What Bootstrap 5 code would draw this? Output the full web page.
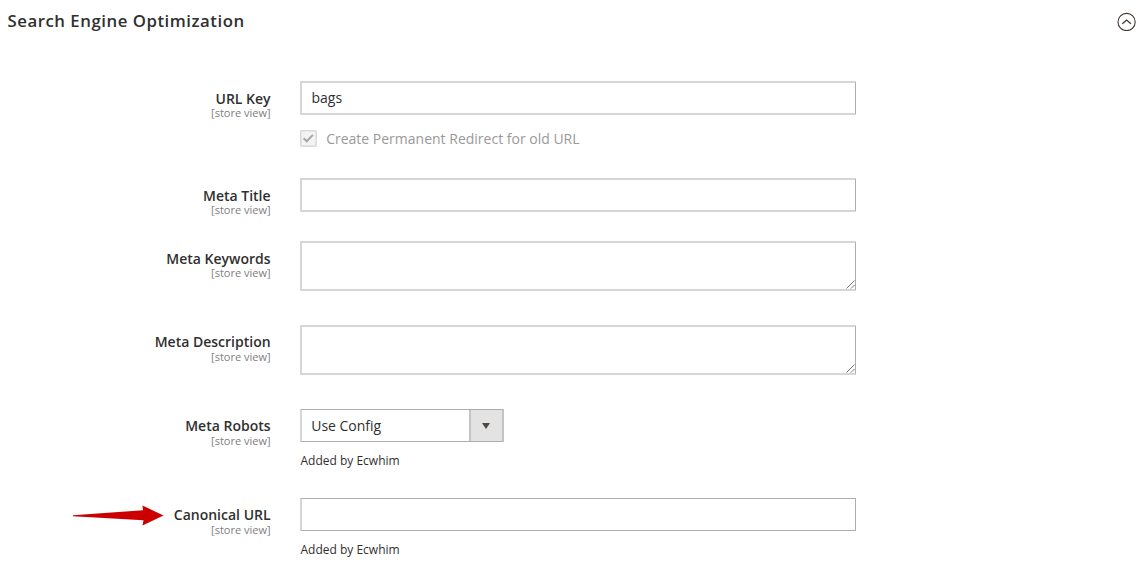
<!DOCTYPE html>
<html lang="en">
<head>
<meta charset="utf-8">
<meta name="viewport" content="width=device-width, initial-scale=1">
<title>Search Engine Optimization</title>
<link href="https://cdn.jsdelivr.net/npm/bootstrap@5.3.0/dist/css/bootstrap.min.css" rel="stylesheet">
<style>
body{font-family:"Open Sans",sans-serif;font-size:14px;color:#303030;background:#fff;overflow:hidden}
.section-head{height:81px;padding:11px 9px 0 7.5px}
.section-title{font-size:16.8px;font-weight:600;line-height:20px;letter-spacing:.52px}
.toggle-icon{margin-top:1px}
.field{height:var(--h)}
.field-label{width:270.6px;padding-top:9px;line-height:17px;font-weight:600}
.field-label.raised{padding-top:8px}
.scope{display:block;font-size:11px;font-weight:400;line-height:14px;margin-top:-1px;color:#808080}
.raised .scope{margin-top:0}
.field-control{width:556px;margin-left:29.4px}
.form-control.box{height:34px;border:2px solid #d6d6d6;border-right:1px solid #adadad;border-radius:1px;padding:0 9px 2px 9.5px;font-size:14px;color:#303030;line-height:20px}
.form-control.area{height:50px;min-height:0;resize:none}
.form-control.crisp{height:33px;border-top:1px solid #adadad;border-bottom:1px solid #adadad}
.grip{right:1px;bottom:2px}
.redirect{margin-top:13px;color:#999;line-height:20px;gap:9.2px}
.redirect-text{padding-top:1px}
.picker{width:204px;height:33px;border:1px solid #adadad;border-left:2px solid #d6d6d6;border-right:2px solid #c4c4c4;border-radius:1px;background:#fff}
.picker-value{padding:0 0 1px 9.2px}
.picker-arrow{width:33px;background:#e3e3e3;border-left:2px solid #c4c4c4}
.note{font-size:12px;line-height:16px;margin-top:11px;padding-left:.5px}
.pointer{margin-right:10px;margin-top:-1.5px}
</style>
</head>
<body>
<header class="section-head d-flex justify-content-between align-items-start">
  <h1 class="section-title m-0">Search Engine Optimization</h1>
  <svg class="toggle-icon" width="19" height="19" viewBox="0 0 19 19" fill="none" stroke="#41362f"><circle cx="9.6" cy="10" r="8.6" stroke-width="1.1"/><path d="M5.3 11.7 9.6 8l4.3 3.7" stroke-width="1.3"/></svg>
</header>
<main>
  <div class="field d-flex align-items-start" style="--h:97px">
    <label class="field-label text-end" for="key">URL Key<span class="scope">[store view]</span></label>
    <div class="field-control">
      <input id="key" class="form-control box" value="bags">
      <div class="redirect d-flex align-items-center">
        <svg width="17" height="17" viewBox="0 0 17 17"><rect x=".75" y=".75" width="15.5" height="15.5" rx="1" fill="#f3f3f3" stroke="#d9d9d9" stroke-width="1.5"/><path d="M3.6 8.2 6.8 11.3 12.9 4.9" fill="none" stroke="#a6a6a6" stroke-width="2"/></svg>
        <span class="redirect-text">Create Permanent Redirect for old URL</span>
      </div>
    </div>
  </div>
  <div class="field d-flex align-items-start" style="--h:63px">
    <label class="field-label text-end" for="title">Meta Title<span class="scope">[store view]</span></label>
    <div class="field-control"><input id="title" class="form-control box"></div>
  </div>
  <div class="field d-flex align-items-start" style="--h:84px">
    <label class="field-label text-end" for="words">Meta Keywords<span class="scope">[store view]</span></label>
    <div class="field-control position-relative">
      <textarea id="words" class="form-control box area d-block"></textarea>
      <svg class="grip position-absolute" width="9" height="9" viewBox="0 0 9 9" stroke="#777" fill="none"><path d="M.5 8.5l8-8M5 8.5 8.5 5"/></svg>
    </div>
  </div>
  <div class="field d-flex align-items-start" style="--h:84px">
    <label class="field-label raised text-end" for="desc">Meta Description<span class="scope">[store view]</span></label>
    <div class="field-control position-relative">
      <textarea id="desc" class="form-control box area d-block"></textarea>
      <svg class="grip position-absolute" width="9" height="9" viewBox="0 0 9 9" stroke="#777" fill="none"><path d="M.5 8.5l8-8M5 8.5 8.5 5"/></svg>
    </div>
  </div>
  <div class="field d-flex align-items-start" style="--h:89px">
    <div class="field-label raised text-end">Meta Robots<span class="scope">[store view]</span></div>
    <div class="field-control">
      <div class="picker d-flex align-items-stretch">
        <span class="picker-value flex-grow-1 d-flex align-items-center">Use Config</span>
        <span class="picker-arrow d-flex align-items-center justify-content-center"><svg width="8" height="6" viewBox="0 0 8 6"><path d="M0 0h8L4 6z" fill="#514943"/></svg></span>
      </div>
      <div class="note">Added by Ecwhim</div>
    </div>
  </div>
  <div class="field d-flex align-items-start" style="--h:73px">
    <div class="field-label raised d-flex justify-content-end align-items-start">
      <svg class="pointer" width="91" height="22" viewBox="0 0 91 22"><path d="M0 10.3 70 5.3 69.5.5 90.5 10.5 69.5 20.5 70.5 15.3 0 11.2z" fill="#c00"/></svg>
      <label class="text-end" for="canon">Canonical URL<span class="scope">[store view]</span></label>
    </div>
    <div class="field-control">
      <input id="canon" class="form-control box crisp">
      <div class="note">Added by Ecwhim</div>
    </div>
  </div>
</main>
<script src="https://cdn.jsdelivr.net/npm/bootstrap@5.3.0/dist/js/bootstrap.bundle.min.js"></script>
</body>
</html>
